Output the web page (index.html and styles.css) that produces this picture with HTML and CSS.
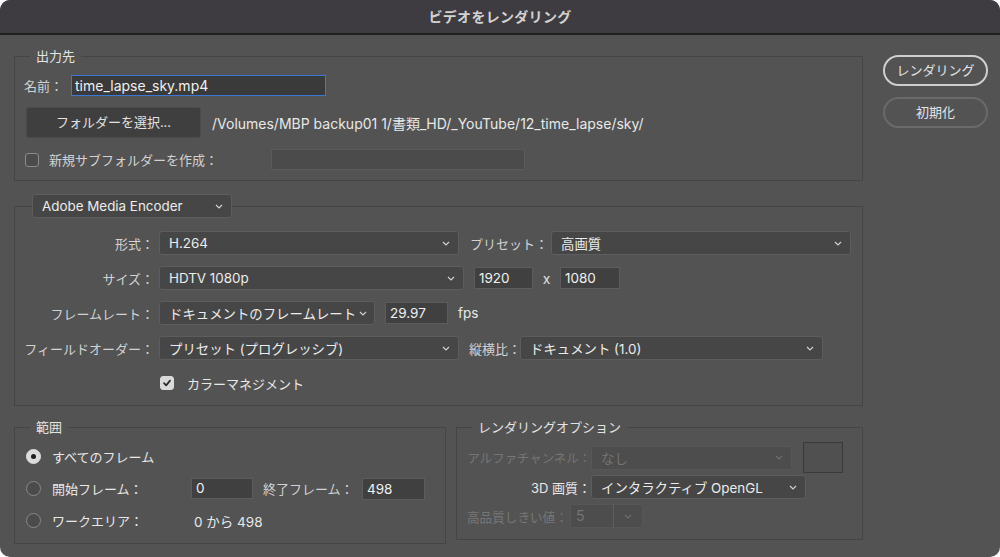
FILE: index.html
```html
<!DOCTYPE html>
<html lang="ja">
<head>
<meta charset="utf-8">
<title>ビデオをレンダリング</title>
<link rel="stylesheet" href="styles.css">
</head>
<body>
<div class="window">
  <header class="titlebar">ビデオをレンダリング</header>
  <div class="content">
    <div class="main">
      <fieldset class="group g-output">
        <legend class="legend">出力先</legend>
        <div class="row">
          <span class="lbl name-lbl">名前：</span>
          <div class="field field-focus name-field">time_lapse_sky.mp4</div>
        </div>
        <div class="row row-btn">
          <div class="btn folder-btn">フォルダーを選択...</div>
          <span class="path">/Volumes/MBP backup01 1/書類_HD/_YouTube/12_time_lapse/sky/</span>
        </div>
        <div class="row">
          <span class="check"></span>
          <span class="lbl sub-lbl">新規サブフォルダーを作成：</span>
          <div class="field field-dim sub-field"></div>
        </div>
      </fieldset>

      <fieldset class="group g-encoder">
        <legend class="legend-select">
          <div class="select w-ame"><span>Adobe Media Encoder</span><svg class="chev" viewBox="0 0 8 5"><polyline points="1,1 4,4 7,1"/></svg></div>
        </legend>
        <div class="frow">
          <span class="lbl flabel">形式：</span>
          <div class="select w300"><span>H.264</span><svg class="chev" viewBox="0 0 8 5"><polyline points="1,1 4,4 7,1"/></svg></div>
          <span class="lbl ilabel w-preset">プリセット：</span>
          <div class="select w300"><span>高画質</span><svg class="chev" viewBox="0 0 8 5"><polyline points="1,1 4,4 7,1"/></svg></div>
        </div>
        <div class="frow">
          <span class="lbl flabel">サイズ：</span>
          <div class="select w305"><span>HDTV 1080p</span><svg class="chev" viewBox="0 0 8 5"><polyline points="1,1 4,4 7,1"/></svg></div>
          <div class="field num w59">1920</div>
          <span class="times">x</span>
          <div class="field num w60">1080</div>
        </div>
        <div class="frow">
          <span class="lbl flabel">フレームレート：</span>
          <div class="select w216"><span>ドキュメントのフレームレート</span><svg class="chev" viewBox="0 0 8 5"><polyline points="1,1 4,4 7,1"/></svg></div>
          <div class="field num w63">29.97</div>
          <span class="val unit">fps</span>
        </div>
        <div class="frow">
          <span class="lbl flabel">フィールドオーダー：</span>
          <div class="select w300"><span>プリセット (プログレッシブ)</span><svg class="chev" viewBox="0 0 8 5"><polyline points="1,1 4,4 7,1"/></svg></div>
          <span class="lbl ilabel w-aspect">縦横比：</span>
          <div class="select w303"><span>ドキュメント (1.0)</span><svg class="chev" viewBox="0 0 8 5"><polyline points="1,1 4,4 7,1"/></svg></div>
        </div>
        <div class="frow crow">
          <span class="check checked"><svg viewBox="0 0 14 14"><polyline points="3.5,7.2 6,9.8 10.5,4.2"/></svg></span>
          <span class="val color-lbl">カラーマネジメント</span>
        </div>
      </fieldset>

      <div class="bottom">
        <fieldset class="group g-range">
          <legend class="legend">範囲</legend>
          <div class="rrow">
            <span class="radio on"></span>
            <span class="val rlabel">すべてのフレーム</span>
          </div>
          <div class="rrow">
            <span class="radio"></span>
            <span class="val rlabel w139">開始フレーム：</span>
            <div class="field num w62">0</div>
            <span class="lbl end-lbl">終了フレーム：</span>
            <div class="field num w63">498</div>
          </div>
          <div class="rrow">
            <span class="radio"></span>
            <span class="val rlabel w139">ワークエリア：</span>
            <span class="val range-val">0 から 498</span>
          </div>
        </fieldset>

        <fieldset class="group g-options">
          <legend class="legend">レンダリングオプション</legend>
          <div class="orow orow-1">
            <span class="lbl olabel dim">アルファチャンネル：</span>
            <div class="select disabled w201"><span>なし</span><svg class="chev" viewBox="0 0 8 5"><polyline points="1,1 4,4 7,1"/></svg></div>
            <span class="swatch"></span>
          </div>
          <div class="orow orow-2">
            <span class="val olabel">3D 画質：</span>
            <div class="select w215"><span>インタラクティブ OpenGL</span><svg class="chev" viewBox="0 0 8 5"><polyline points="1,1 4,4 7,1"/></svg></div>
          </div>
          <div class="orow orow-3">
            <span class="lbl dim thr-lbl">高品質しきい値：</span>
            <div class="combo disabled">
              <span class="combo-val">5</span>
              <span class="combo-btn"><svg class="chev" viewBox="0 0 8 5"><polyline points="1,1 4,4 7,1"/></svg></span>
            </div>
          </div>
        </fieldset>
      </div>
    </div>

    <div class="side">
      <div class="pill primary">レンダリング</div>
      <div class="pill">初期化</div>
    </div>
  </div>
</div>
</body>
</html>
```

FILE: styles.css
```css
html, body {
  margin: 0;
  padding: 0;
  background: #ffffff;
}

body {
  font-family: "Inter", "Noto Sans CJK JP", sans-serif;
  color: #e6e6e6;
}

.window {
  width: 1000px;
  height: 557px;
  background: #535353;
  border-radius: 10px;
  overflow: hidden;
  box-sizing: border-box;
}

.titlebar {
  height: 33px;
  line-height: 33px;
  background: #3e3c41;
  border-bottom: 2px solid #202020;
  text-align: center;
  font-size: 14px;
  font-weight: bold;
  color: #d2d2d2;
  letter-spacing: 0.3px;
}

.content {
  display: flex;
  gap: 20px;
  padding: 13px 0 0 14px;
}

.main {
  width: 849px;
}

/* groups */
.group {
  margin: 0;
  border: 1px solid #454545;
  min-width: 0;
  box-sizing: border-box;
}

.legend {
  padding: 0 6px;
  font-size: 13px;
  line-height: 16px;
  color: #e4e4e4;
}

.legend-select {
  margin-left: 8px;
  padding: 0;
}

.lbl {
  font-size: 13px;
  color: #d2d2d2;
  white-space: nowrap;
}

.val {
  font-size: 13.5px;
  color: #e8e8e8;
  white-space: nowrap;
}

.dim {
  color: #767676;
}

.row {
  display: flex;
  align-items: center;
  height: 21px;
}

.row + .row {
  margin-top: 11px;
}

.row-btn {
  height: 31px;
}

/* output group */
.g-output {
  padding: 11px 10px 10px 9px;
}

.g-output .legend {
  margin-left: 6px;
}

.name-lbl {
  width: 47px;
  flex: none;
}

.field {
  box-sizing: border-box;
  height: 21px;
  background: #404040;
  border: 1px solid #5c5c5c;
  font-size: 13.5px;
  line-height: 19px;
  color: #f0f0f0;
  padding: 0 4px;
  white-space: nowrap;
  overflow: hidden;
}

.field-focus {
  background: #3a3a3a;
  border-color: #3b78d6;
  font-size: 14px;
  padding-left: 3px;
}

.name-field {
  width: 255px;
}

.btn {
  box-sizing: border-box;
  width: 175px;
  height: 31px;
  margin-left: 2px;
  background: #3f3f3f;
  border: 1px solid #4b4b4b;
  border-radius: 3px;
  font-size: 13px;
  line-height: 29px;
  text-align: center;
  color: #e2e2e2;
}

.path {
  margin-left: 11px;
  font-size: 14px;
  color: #e8e8e8;
  white-space: nowrap;
}

.check {
  box-sizing: border-box;
  width: 14px;
  height: 14px;
  margin-left: 1px;
  border: 1px solid #8c8c8c;
  border-radius: 3px;
  background: #4b4b4b;
  flex: none;
  display: flex;
}

.check.checked {
  background: #dadada;
  border-color: #dadada;
}

.check svg {
  width: 12px;
  height: 12px;
  fill: none;
  stroke: #2a2a2a;
  stroke-width: 2;
  stroke-linecap: round;
  stroke-linejoin: round;
}

.sub-lbl {
  width: 222px;
  margin-left: 10px;
}

.field-dim {
  background: #4b4b4b;
  border-color: #5a5a5a;
}

.sub-field {
  width: 254px;
}

/* encoder group */
.g-encoder {
  margin-top: 13px;
  padding: 13px 11px 10px 9px;
}

.select {
  box-sizing: border-box;
  height: 24px;
  background: #464646;
  border: 1px solid #5d5d5d;
  border-radius: 3px;
  padding: 0 8px 0 9px;
  display: flex;
  align-items: center;
  justify-content: space-between;
  gap: 4px;
  font-size: 13.4px;
  color: #ececec;
  white-space: nowrap;
  flex: none;
}

.select span {
  overflow: hidden;
}

.chev {
  width: 8px;
  height: 5px;
  flex: none;
  fill: none;
  stroke: #d0d0d0;
  stroke-width: 1.2;
}

.w-ame { width: 200px; }
.w300 { width: 300px; }
.w305 { width: 305px; }
.w216 { width: 216px; padding-right: 7px; }
.w303 { width: 303px; }
.w201 { width: 201px; }
.w215 { width: 215px; }

.frow {
  display: flex;
  align-items: center;
  height: 24px;
}

.frow + .frow {
  margin-top: 11px;
}

.flabel {
  width: 130px;
  margin-right: 5px;
  text-align: right;
  flex: none;
}

.ilabel {
  flex: none;
  margin-left: 11px;
}

.w-preset { width: 81px; }
.w-aspect { width: 51px; margin-left: 10px; }

.num {
  height: 22px;
  line-height: 20px;
  margin-left: 10px;
  flex: none;
}

.w59 { width: 59px; }
.w60 { width: 60px; margin-left: 0; }
.w63 { width: 63px; }
.w62 { width: 62px; margin-left: 0; height: 21px; line-height: 19px; }

.times {
  width: 27px;
  text-align: center;
  font-size: 14px;
  color: #e0e0e0;
  flex: none;
}

.unit {
  margin-left: 10px;
}

.crow {
  padding-left: 136px;
}

.crow .check {
  margin-left: 0;
}

.color-lbl {
  margin-left: 13px;
  font-size: 13px;
}

/* bottom groups */
.bottom {
  display: flex;
  align-items: flex-start;
  gap: 10px;
  margin-top: 13px;
}

.g-range {
  width: 432px;
  padding: 11px 10px 12px 11px;
}

.g-range .legend {
  margin-left: 4px;
}

.rrow {
  display: flex;
  align-items: center;
  height: 21px;
}

.rrow + .rrow {
  margin-top: 11px;
}

.radio {
  box-sizing: border-box;
  width: 15px;
  height: 15px;
  border-radius: 50%;
  border: 1px solid #8a8a8a;
  background: #4b4b4b;
  flex: none;
  display: flex;
  align-items: center;
  justify-content: center;
}

.radio.on {
  background: #dcdcdc;
  border-color: #dcdcdc;
}

.radio.on::after {
  content: "";
  width: 5px;
  height: 5px;
  border-radius: 50%;
  background: #202020;
}

.rlabel {
  margin-left: 11px;
  font-size: 13px;
}

.w139 {
  width: 139px;
  flex: none;
}

.end-lbl {
  width: 99px;
  margin-left: 10px;
  flex: none;
}

.end-lbl + .num {
  margin-left: 0;
}

.range-val {
  padding-left: 3px;
}

.g-options {
  width: 407px;
  padding: 7px 10px 11px 10px;
}

.g-options .legend {
  margin-left: 5px;
}

.orow {
  display: flex;
  align-items: center;
}

.orow-1 { height: 31px; }
.orow-2 { height: 24px; margin-top: 2px; }
.orow-3 { height: 24px; margin-top: 5px; }

.olabel {
  width: 124px;
  text-align: right;
  flex: none;
  font-size: 13px;
}

.orow-1 .olabel {
  font-size: 12.4px;
}

.select.disabled {
  background: #4d4d4d;
  border-color: #575757;
  color: #747474;
}

.select.disabled .chev,
.combo.disabled .chev {
  stroke: #6e6e6e;
}

.swatch {
  box-sizing: border-box;
  width: 40px;
  height: 31px;
  margin-left: 11px;
  border: 1px solid #3a3a3a;
  background: #505050;
  flex: none;
}

.thr-lbl {
  width: 103px;
  flex: none;
  font-size: 12.6px;
}

.combo {
  box-sizing: border-box;
  width: 73px;
  height: 24px;
  display: flex;
  border: 1px solid #575757;
  border-radius: 3px;
  background: #4d4d4d;
}

.combo-val {
  width: 43px;
  box-sizing: border-box;
  padding-left: 5px;
  border-right: 1px solid #5e5e5e;
  font-size: 14px;
  line-height: 22px;
  color: #747474;
}

.combo-btn {
  flex: 1;
  display: flex;
  align-items: center;
  justify-content: center;
}

/* side buttons */
.side {
  display: flex;
  flex-direction: column;
  gap: 11px;
  padding-top: 7px;
}

.pill {
  box-sizing: border-box;
  width: 105px;
  height: 31px;
  border: 2px solid #6a6a6a;
  border-radius: 16px;
  font-size: 13px;
  line-height: 27px;
  text-align: center;
  color: #e4e4e4;
}

.pill.primary {
  border-color: #cfcfcf;
}
```
